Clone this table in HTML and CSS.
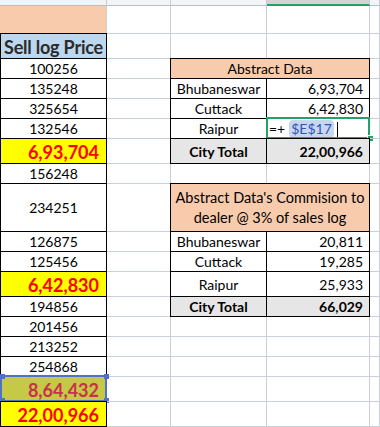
FILE: index.html
```html
<!DOCTYPE html>
<html lang="en">
<head>
<meta charset="utf-8">
<title>Sell log Price</title>
<link rel="stylesheet" href="styles.css">
</head>
<body>
<div class="sheet">
  <!-- column headers -->
  <div class="c hd"></div><div class="c hd"></div><div class="c hd"></div><div class="c hd sel"></div><div class="c hd"></div>

  <div class="c a peach"></div><div class="c"></div><div class="c"></div><div class="c"></div><div class="c"></div>

  <div class="c a box blue title">Sell log Price</div><div class="c"></div><div class="c"></div><div class="c"></div><div class="c"></div>

  <div class="c a box ctr">100256</div><div class="c"></div><div class="c box peach ctr span2">Abstract Data</div><div class="c"></div>

  <div class="c a box ctr">135248</div><div class="c"></div><div class="c box ctr">Bhubaneswar</div><div class="c box num">6,93,704</div><div class="c"></div>

  <div class="c a box ctr">325654</div><div class="c"></div><div class="c box ctr">Cuttack</div><div class="c box num">6,42,830</div><div class="c"></div>

  <div class="c a box ctr">132546</div><div class="c"></div><div class="c box ctr">Raipur</div>
  <div class="c box edit"><span class="op">=+</span> <span class="ref">$E$17</span><span class="caret"></span><span class="selframe"></span><span class="handle"></span></div><div class="c"></div>

  <div class="c a box yel big">6,93,704</div><div class="c"></div><div class="c box grey ctr b">City Total</div><div class="c box grey num b">22,00,966</div><div class="c"></div>

  <div class="c a box ctr">156248</div><div class="c"></div><div class="c"></div><div class="c"></div><div class="c"></div>

  <div class="c a box ctr">234251</div><div class="c"></div><div class="c box peach ctr span2 wrap">Abstract Data's Commision to<br>dealer @ 3% of sales log</div><div class="c"></div>

  <div class="c a box ctr">126875</div><div class="c"></div><div class="c box ctr">Bhubaneswar</div><div class="c box num">20,811</div><div class="c"></div>

  <div class="c a box ctr">125456</div><div class="c"></div><div class="c box ctr">Cuttack</div><div class="c box num">19,285</div><div class="c"></div>

  <div class="c a box yel big">6,42,830</div><div class="c"></div><div class="c box ctr">Raipur</div><div class="c box num">25,933</div><div class="c"></div>

  <div class="c a box ctr">194856</div><div class="c"></div><div class="c box grey ctr b">City Total</div><div class="c box grey num b">66,029</div><div class="c"></div>

  <div class="c a box ctr">201456</div><div class="c"></div><div class="c"></div><div class="c"></div><div class="c"></div>

  <div class="c a box ctr">213252</div><div class="c"></div><div class="c"></div><div class="c"></div><div class="c"></div>

  <div class="c a box ctr">254868</div><div class="c"></div><div class="c"></div><div class="c"></div><div class="c"></div>

  <div class="c a box olive big">8,64,432<span class="refframe"><i class="h tl"></i><i class="h tr"></i><i class="h bl"></i><i class="h br"></i></span></div><div class="c"></div><div class="c"></div><div class="c"></div><div class="c"></div>

  <div class="c a box yel big">22,00,966</div><div class="c"></div><div class="c"></div><div class="c"></div><div class="c"></div>

  <div class="c a"></div><div class="c"></div><div class="c"></div><div class="c"></div><div class="c"></div>
</div>
</body>
</html>
```

FILE: styles.css
```css
html, body {
  margin: 0;
  padding: 0;
  background: #ffffff;
  overflow: hidden;
}

.sheet {
  --grid: #c9cfdb;
  display: grid;
  grid-template-columns: 107px 64px 96px 103px 10px;
  grid-template-rows: 6px 28px 25px 20px 20px 20px 20px 25px 20px 48px 20px 20px 25px 20px 20px 20px 20px 25px 25px 1px;
  width: 380px;
  height: 427px;
  overflow: hidden;
  font-family: Lato, "Open Sans", sans-serif;
  font-size: 14px;
  color: #000;
}

.c {
  box-sizing: border-box;
  border-right: 1px solid var(--grid);
  border-bottom: 1px solid var(--grid);
  display: flex;
  align-items: center;
  white-space: nowrap;
  overflow: visible;
  position: relative;
  line-height: 18px;
  padding-top: 1px;
}

.hd {
  padding-top: 0;
  background: #f3f4f6;
  border-bottom-color: #b7bec9;
  border-right-color: #c6ccd6;
}

.hd.sel {
  background: #d4d4d4;
  border-bottom: 2px solid #21a366;
}

.box {
  border-right-color: #000;
  border-bottom-color: #000;
  box-shadow: -1px 0 0 #000, 0 -1px 0 #000, -1px -1px 0 #000;
}

.a.box {
  border-left: 1px solid #000;
}

.peach {
  background: #f8cbad;
}

.blue {
  background: #bdd7ee;
}

.grey {
  background: #e7e6e6;
}

.yel {
  background: #ffff00;
}

.olive {
  background: #c5c946;
}

.span2 {
  grid-column: span 2;
}

.ctr {
  justify-content: center;
}

.num {
  justify-content: flex-end;
  padding-right: 6px;
}

.b {
  font-weight: 700;
}

.title {
  justify-content: center;
  font-weight: 700;
  font-size: 18px;
  color: #2b2b2b;
  letter-spacing: -0.2px;
}

.big {
  justify-content: flex-end;
  padding-right: 7px;
  font-weight: 700;
  font-size: 18px;
  color: #ff0000;
}

.olive.big {
  color: #c9304c;
}

.wrap {
  white-space: normal;
  text-align: center;
  line-height: 20px;
  font-size: 14.5px;
}

.edit {
  padding-left: 2px;
}

.op {
  color: #000;
}

.ref {
  margin-left: 4px;
  background: #c8d6ef;
  color: #2f55b5;
  border-radius: 4px;
  padding: 0 2px;
}

.caret {
  display: inline-block;
  width: 1px;
  height: 15px;
  background: #000;
  margin-left: 3px;
}

.selframe {
  position: absolute;
  top: -2px;
  left: -1px;
  right: -1px;
  bottom: -1px;
  border: 2px solid #21a366;
  pointer-events: none;
}

.handle {
  position: absolute;
  right: -4px;
  bottom: -3px;
  width: 5px;
  height: 5px;
  background: #21a366;
  box-shadow: 0 0 0 1px #ffffff;
}

.refframe {
  position: absolute;
  top: -2px;
  left: -1px;
  right: -1px;
  bottom: -1px;
  border: 2px solid #4d72c6;
}

.h {
  position: absolute;
  width: 5px;
  height: 5px;
  background: #4d72c6;
}

.h.tl { left: -2px; top: -3px; }
.h.tr { right: -4px; top: -3px; }
.h.bl { left: -2px; bottom: -3px; }
.h.br { right: -4px; bottom: -3px; }
```
